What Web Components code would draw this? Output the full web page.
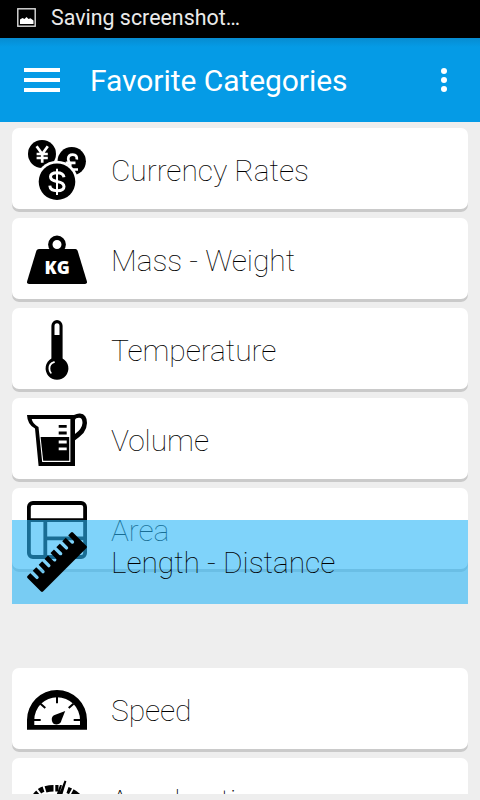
<!DOCTYPE html>
<html lang="en">
<head>
<meta charset="utf-8">
<title>Favorite Categories</title>
<style>
html,body{margin:0;height:100%;overflow:hidden;background:#eee;font-family:Roboto,sans-serif}
</style>
</head>
<body>
<phone-screen>
  <status-bar slot="status">Saving screenshot…</status-bar>
  <action-bar slot="bar">Favorite Categories</action-bar>
  <category-card icon="currency">Currency Rates</category-card>
  <category-card icon="weight">Mass - Weight</category-card>
  <category-card icon="thermometer">Temperature</category-card>
  <category-card icon="jug">Volume</category-card>
  <category-card icon="area">Area</category-card>
  <drop-gap></drop-gap>
  <category-card icon="speed">Speed</category-card>
  <category-card icon="accel">Acceleration</category-card>
  <category-card slot="drag" icon="ruler" dragging>Length - Distance</category-card>
</phone-screen>
<script>
const icons = {
currency: `<circle cx="15" cy="14" r="14"/><circle cx="44.7" cy="21.3" r="14.2"/>
 <g fill="none" stroke="#fff" stroke-width="2.7"><path d="M9.6 6.2L15.2 14L20.8 6.2M15.2 13V22.8M9.6 14H20.8M9.6 18H20.8"/>
 <path d="M49.8 19.5Q50.3 14.7 45.8 14.7Q41.2 14.7 41.2 19Q41.2 21 42.8 23Q44.2 26.5 41 29.5H51M38.7 22.8H48.5"/></g>
 <circle cx="30" cy="41.7" r="21" fill="#fff"/><circle cx="30" cy="41.7" r="18.3"/>
 <path d="M37 37.2Q36.3 32.7 30 32.7Q23.5 32.7 23.5 36.8Q23.5 40.3 29.8 41.4Q37 42.5 37 46.5Q37 50.8 30.2 50.8Q23.2 50.8 22.8 45.7" fill="none" stroke="#fff" stroke-width="3"/><path d="M30 28.7V55" stroke="#fff" stroke-width="2"/>`,
weight: `<circle cx="30" cy="14.5" r="6.7" fill="none" stroke="#000" stroke-width="4.4"/><path d="M12 19H48.5Q50 19 50.6 20.7L59.8 51Q60.5 54 58 54H2Q-.5 54 .2 51L9.4 20.7Q10 19 12 19Z"/>
 <text x="17.6" y="44.3" font-family="Open Sans,sans-serif" font-weight="800" font-size="17" textLength="25.2" lengthAdjust="spacingAndGlyphs" fill="#fff">KG</text>`,
thermometer: `<path d="M24.4 5.8A5.6 5.8 0 0 1 35.6 5.8V38.4A11.4 11.4 0 1 1 24.4 38.4Z"/><path d="M27.5 15V6A2.5 2.7 0 0 1 32.5 6V15Z" fill="#fff"/><path d="M27 42.2Q22.4 43.5 22.4 48.4Q22.4 51 23.8 52.7" fill="none" stroke="#fff" stroke-width="1.8" stroke-linecap="round"/>`,
jug: `<path fill-rule="evenodd" d="M0 5H47Q50 3.3 53 3.5Q60 4.2 60 13Q60 18 56.5 23Q51.5 28 48 30.3V56H11.6L8 18.6Q.3 14.5 0 5ZM4.7 9Q5.5 13.8 11.5 17L15.2 52H43.4V9ZM48 10V24Q55 19 55.5 13Q55.5 7.7 52 7.7Q48.5 7.7 48 10Z"/>
 <path d="M13.6 27H42.2V50.7H16.2Z"/><path d="M31.7 16.3H39.7M31.7 23H39.7" stroke="#000" stroke-width="2.8"/><path d="M31.7 32H39.7M31.7 38.8H39.7" stroke="#fff" stroke-width="2.8"/>`,
area: `<g fill="none" stroke="#000" stroke-width="3.8"><rect x="1.9" y="3" width="56.2" height="54" rx="4"/><path d="M2 20.2H58M18.3 20V57M18.3 38.3H58"/></g>`,
ruler: `<mask id="m"><rect width="60" height="60" fill="#fff"/><path d="M3.8 39.2L10 45.4M9.7 33.3L16 39.6M15.6 27.4L21.8 33.6M21.5 21.5L27.7 27.7M27.4 15.6L33.6 21.8M33.3 9.7L39.5 15.9M39.2 3.8L45.4 10" stroke="#000" stroke-width="3.4" stroke-linecap="round"/></mask>
 <path mask="url(#m)" d="M44 .6Q45 -.4 46 .6L59.5 14Q60.5 15 59.5 16L16 59.5Q15 60.4 14 59.5L.5 46Q-.5 45 .5 44Z"/>`,
speed: `<path fill-rule="evenodd" d="M0 49.7V40A30 30 0 0 1 60 40V49.7ZM7.3 45H53V40A22.8 22.8 0 0 0 7.3 40Z"/><path d="M30 17V23.3M7 40H13.7M46.7 40H53.3M13.5 23.7L18.3 28M46.5 23.7L41.7 28" stroke="#000" stroke-width="2"/><path d="M38.2 31L34.5 40.3A4.9 4.9 0 1 1 28.3 34.8Z"/>`,
accel: `<g fill="none" stroke="#000" stroke-width="6.5"><path d="M7.8 26.5Q9 24.3 11 22.6M12.5 21.3Q14.5 19.8 16.5 19.1" stroke-width="5.5"/><path d="M18.5 19.4Q22.5 18.2 26.5 18.2M28.3 18.2H31.5M40.5 20Q42 20.5 43.5 21.3M45 22.2Q48 23.8 51 26.5"/></g><path d="M37.6 10.5L39.4 11.2L35.2 25H31.6ZM33 15L35 15.3L31.8 25H29.5Z"/>`
};

customElements.define('phone-screen', class extends HTMLElement {
  constructor(){ super(); this.attachShadow({mode:'open'}).innerHTML = `<style>
:host{display:flex;flex-direction:column;position:relative;width:480px;height:800px;background:#eee;overflow:hidden}
main{flex:1;min-height:0;display:flex;flex-direction:column;gap:6px;padding:6px 12px 0;margin-bottom:6px;overflow:hidden}
.drag{position:absolute;left:12px;top:520px;width:456px}
</style><slot name="status"></slot><slot name="bar"></slot><main><slot></slot></main><div class="drag"><slot name="drag"></slot></div>`; }
});
customElements.define('status-bar', class extends HTMLElement {
  constructor(){ super(); this.attachShadow({mode:'open'}).innerHTML = `<style>
:host{display:flex;align-items:center;flex:none;height:38px;box-sizing:border-box;padding:0 0 2px 17px;gap:15px;background:#000;color:#eaeaea;font-size:21.4px;line-height:36px}
svg{display:block;margin-bottom:1px}
</style><svg width="19" height="19"><rect x=".8" y=".8" width="17.4" height="17.4" fill="none" stroke="#ddd" stroke-width="1.4"/><path d="M3 16V11.5L5.5 10L7.5 11L9.5 9L11.5 11L13.5 10.3L16.5 12.5V16Z" fill="#fff"/></svg><span><slot></slot></span>`; }
});
customElements.define('action-bar', class extends HTMLElement {
  constructor(){ super(); this.attachShadow({mode:'open'}).innerHTML = `<style>
:host{display:flex;align-items:center;flex:none;height:84px;box-sizing:border-box;padding:0 33px 0 24px;background:linear-gradient(#078cd1,#059be6 9px,#059be6);color:#fff;font-size:30px}
.menu{display:grid;gap:6px;width:36px;margin-right:30px}
.menu i{height:4px;background:#fff}
.title{flex:1;letter-spacing:-.06px}
.more{display:grid;gap:3px}
.more i{width:6px;height:6px;border-radius:50%;background:#fff}
</style><div class="menu"><i></i><i></i><i></i></div><div class="title"><slot></slot></div><div class="more"><i></i><i></i><i></i></div>`; }
});
customElements.define('category-card', class extends HTMLElement {
  constructor(){ super(); this.attachShadow({mode:'open'}); }
  connectedCallback(){ this.shadowRoot.innerHTML = `<style>
:host{display:flex;align-items:flex-start;flex:none;height:84px;box-sizing:border-box;padding:12px 15px;gap:24px;background:#fff;border-radius:7px;box-shadow:inset 0 -3px #cacaca;color:#000;font-size:30px;font-weight:100}
:host([dragging]){background:rgba(41,182,246,.6);box-shadow:none;border-radius:0}
svg{display:block;flex:none;overflow:visible}
span{line-height:62px;white-space:nowrap;letter-spacing:-.07px}
</style><svg width="60" height="60" viewBox="0 0 60 60">${icons[this.getAttribute('icon')]}</svg><span><slot></slot></span>`; }
});
customElements.define('drop-gap', class extends HTMLElement {
  constructor(){ super(); this.attachShadow({mode:'open'}).innerHTML = `<style>:host{display:block;flex:none;height:84px}</style>`; }
});
</script>
</body>
</html>
